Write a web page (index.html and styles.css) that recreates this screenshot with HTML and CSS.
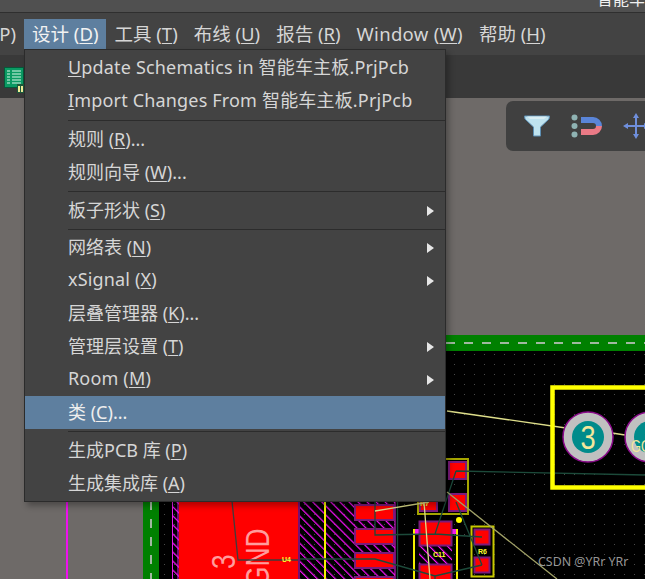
FILE: index.html
```html
<!DOCTYPE html>
<html lang="zh">
<head>
<meta charset="utf-8">
<title>设计菜单</title>
<link rel="stylesheet" href="styles.css">
</head>
<body>
<div class="app">
  <header class="titlebar"><span class="doc-title">智能车</span></header>
  <nav class="menubar">
    <span class="top-item clipped">P)</span>
    <span class="top-item active">设计 (<u>D</u>)</span>
    <span class="top-item">工具 (<u>T</u>)</span>
    <span class="top-item">布线 (<u>U</u>)</span>
    <span class="top-item">报告 (<u>R</u>)</span>
    <span class="top-item wide">Window (<u>W</u>)</span>
    <span class="top-item">帮助 (<u>H</u>)</span>
  </nav>
  <div class="tabstrip">
    <svg class="tab-icon" viewBox="0 0 22 26" width="22" height="26">
      <rect x="0.5" y="0.5" width="19" height="20" fill="#0b9a63" stroke="#06583a"/>
      <path d="M3 4h3M3 7h3M3 10h3M3 13h3M3 16h3M8 4h9M8 7h9M8 10h9M8 13h9M8 16h9" stroke="#d8f5e6" stroke-width="1.2"/>
      <rect x="13" y="17" width="9" height="9" fill="#1c5a3c"/>
      <path d="M15 19v6M18 19v6" stroke="#f2ee9a" stroke-width="2"/>
    </svg>
  </div>
  <main class="workspace">
    <svg class="pcb" viewBox="0 0 645 481" width="645" height="481">
      <defs>
        <pattern id="dots" width="10" height="10" patternUnits="userSpaceOnUse">
          <rect x="4" y="4" width="1" height="1" fill="#4a4a4a"/>
        </pattern>
        <pattern id="hatch" width="6.4" height="6.4" patternUnits="userSpaceOnUse" patternTransform="rotate(-45)">
          <rect width="1.2" height="6.4" fill="#ff10ff" x="0"/>
        </pattern>
      </defs>
      <g transform="translate(0 -98)">
        <rect class="board-edge" x="143" y="335" width="502" height="244"/>
        <rect class="board" x="159" y="351" width="486" height="228"/>
        <rect x="159" y="351" width="486" height="228" fill="url(#dots)"/>
        <path class="dash" d="M151 501V579M446 343H645"/>
        <path class="magenta-line" d="M67 335V579"/>

        <rect x="172" y="501" width="7" height="78" fill="url(#hatch)"/>
        <path class="magenta-thin" d="M172.500 501V579M178 501V579M299 501V579"/>
        <rect class="red" x="179" y="501" width="119" height="78"/>
        <text class="pad-big" transform="translate(235 569) rotate(-90) scale(.8 1)">3</text>
        <text class="pad-big" transform="translate(269 587) rotate(-90) scale(.8 1)">GND</text>
        <path class="trace-grey" d="M232 501L238 560H298"/>
        <text class="tiny" x="282" y="562">U4</text>

        <rect x="300" y="501" width="95" height="78" fill="url(#hatch)"/>
        <path class="yellow-line" d="M325 501V579"/>
        <path class="magenta-thin" d="M395 501V579"/>
        <path class="trace-green" d="M397.500 501V579"/>
        <rect class="pad" x="355" y="505" width="39" height="15"/>
        <rect class="pad" x="355" y="529" width="39" height="15"/>
        <rect class="pad" x="355" y="553" width="39" height="15"/>
        <rect class="pad" x="355" y="577" width="39" height="8"/>

        <rect class="olive" x="418" y="459" width="50" height="55"/>
        <rect class="pad" x="449" y="462" width="17" height="17"/>
        <rect class="pad" x="449" y="494" width="17" height="17"/>
        <rect class="pad" x="420" y="494" width="17" height="17"/>
        <text class="tiny" x="420" y="506">R7</text>

        <rect x="419" y="521" width="33" height="58" fill="url(#hatch)"/>
        <path class="yellow-line" d="M414 529V579M457 529V579"/>
        <rect class="magenta-fill" x="415" y="529" width="4" height="5"/>
        <rect class="magenta-fill" x="452" y="529" width="4" height="5"/>
        <rect class="pad" x="419.500" y="521.500" width="32" height="24"/>
        <rect class="pad" x="419.500" y="564.500" width="32" height="20"/>
        <text class="tiny" x="433" y="557">C11</text>

        <circle class="via" cx="459" cy="520" r="3"/>

        <rect class="olive-r" x="471.500" y="526.500" width="22" height="50"/>
        <rect class="pad" x="474.500" y="529.500" width="15" height="15"/>
        <rect class="pad" x="474.500" y="557.500" width="15" height="15"/>
        <text class="tiny" x="478" y="554">R6</text>

        <path class="trace-green" d="M375 501V535L435 534L482 537M300 559H375L435 576L482 565M456 471L435 534M456 471L645 475M456 502L482 565M435 576V579"/>
        <path class="trace-pale" d="M447 411L566 428M612 433L625 435M375 511L429 502M424 502L430 579"/>
        <path class="trace-olive" d="M447 492L557 579"/>

        <rect class="silk" x="552.500" y="387.500" width="110" height="100"/>
        <circle class="ring" cx="588" cy="437" r="25"/>
        <circle class="hole" cx="588" cy="437" r="16"/>
        <text class="pad-num" transform="translate(588 449) scale(.8 1)">3</text>
        <circle class="ring" cx="650" cy="437" r="25"/>
        <circle class="hole" cx="650" cy="437" r="16"/>
        <text class="pad-net" transform="translate(631 452) scale(.8 1)">GO</text>
      </g>
    </svg>

    <div class="float-tools">
      <svg class="tool-filter" viewBox="0 0 26 22" width="26" height="22">
        <path d="M0.500 1H25.500L25 4L16.500 12V21H9.500V12L1 4Z" fill="#bfe3ef" stroke="#5c8fb4"/>
        <path d="M3 1.500H23L20 4H6Z" fill="#d9edf3"/>
      </svg>
      <svg class="tool-magnet" viewBox="0 0 32 24" width="32" height="24">
        <circle cx="3.500" cy="3.500" r="3" fill="#8fb3b3"/>
        <circle cx="3.500" cy="12" r="3" fill="#8fb3b3"/>
        <circle cx="3.500" cy="20.500" r="3" fill="#8fb3b3"/>
        <path d="M10 3H22A9 9 0 0 1 31 12H25A3 3 0 0 0 22 9H10Z" fill="#5a85d8"/>
        <path d="M10 21H22A9 9 0 0 0 31 12H25A3 3 0 0 1 22 15H10Z" fill="#ea7a86"/>
      </svg>
      <svg class="tool-move" viewBox="0 0 26 26" width="26" height="26">
        <path d="M13 2V24M2 13H24" stroke="#6f8fdc" stroke-width="2" fill="none"/>
        <path d="M13 0L16 5H10ZM13 26L16 21H10ZM0 13L5 10V16ZM26 13L21 10V16Z" fill="#6f8fdc"/>
      </svg>
    </div>
  </main>

  <div class="dropdown">
    <div class="row latin"><span><u>U</u>pdate Schematics in 智能车主板.PrjPcb</span></div>
    <div class="row latin"><span><u>I</u>mport Changes From 智能车主板.PrjPcb</span></div>
    <div class="sep sep-wide"></div>
    <div class="row"><span>规则 (<u>R</u>)...</span></div>
    <div class="row"><span>规则向导 (<u>W</u>)...</span></div>
    <div class="sep"></div>
    <div class="row has-sub"><span>板子形状 (<u>S</u>)</span></div>
    <div class="sep sep-narrow"></div>
    <div class="row has-sub"><span>网络表 (<u>N</u>)</span></div>
    <div class="row has-sub latin"><span>xSignal (<u>X</u>)</span></div>
    <div class="row"><span>层叠管理器 (<u>K</u>)...</span></div>
    <div class="row has-sub"><span>管理层设置 (<u>T</u>)</span></div>
    <div class="row has-sub latin"><span>Room (<u>M</u>)</span></div>
    <div class="row selected"><span>类 (<u>C</u>)...</span></div>
    <div class="sep"></div>
    <div class="row"><span>生成PCB 库 (<u>P</u>)</span></div>
    <div class="row"><span>生成集成库 (<u>A</u>)</span></div>
  </div>

  <div class="watermark">CSDN @YRr YRr</div>
</div>
</body>
</html>
```

FILE: styles.css
```css
* { box-sizing: border-box; }

html, body {
  margin: 0;
  padding: 0;
  height: 100%;
  overflow: hidden;
}

body {
  font-family: "Noto Sans", "Noto Sans CJK SC", sans-serif;
  font-size: 18px;
  color: #d6d6d6;
  background: #6e6a68;
}

.app {
  position: relative;
  width: 645px;
  height: 579px;
  overflow: hidden;
  display: flex;
  flex-direction: column;
}

u {
  text-underline-offset: 2px;
  text-decoration-thickness: 1px;
}

.titlebar {
  height: 13px;
  flex: none;
  background: #505050;
  border-bottom: 1px solid #2f2f2f;
  display: flex;
  justify-content: flex-end;
  overflow: hidden;
}

.doc-title {
  width: 48px;
  line-height: 14px;
  font-size: 16px;
  margin-top: -8px;
  color: #f0f0f0;
  white-space: nowrap;
  overflow: hidden;
}

.menubar {
  height: 42px;
  flex: none;
  background: #434343;
  display: flex;
  align-items: flex-start;
  padding-top: 6px;
  font-size: 18.500px;
  white-space: nowrap;
}

.top-item {
  display: flex;
  align-items: center;
  height: 30px;
  padding: 0 8px 2px;
  white-space: pre;
}

.top-item.wide { letter-spacing: 0.300px; }

.top-item.clipped {
  width: 24px;
  padding: 0 8px 2px 0;
  justify-content: flex-end;
  overflow: hidden;
}

.top-item.active {
  background: #5e7f9f;
  color: #f2f2f2;
}

.tabstrip {
  height: 43px;
  flex: none;
  background: #393939;
  padding: 12px 0 0 4px;
}

.tab-icon { display: block; }

.workspace {
  position: relative;
  flex: 1;
  background: #6e6a68;
}

.pcb {
  position: absolute;
  left: 0;
  top: 0;
  display: block;
}

.board-edge { fill: #008000; }
.board { fill: #000; }
.dash { fill: none; stroke: #a0b8a0; stroke-width: 2; stroke-dasharray: 9 9; }
.magenta-line { fill: none; stroke: #ee10ee; stroke-width: 2; }
.magenta-thin { fill: none; stroke: #e81ee8; stroke-width: 1; }
.magenta-fill { fill: #f01cf0; }
.red { fill: #ff0000; }
.pad { fill: #ff0000; stroke: #7c1a7c; stroke-width: 2; }
.olive { fill: none; stroke: #a5a500; stroke-width: 2; }
.olive-r { fill: none; stroke: #c8c800; stroke-width: 2; }
.yellow-line { fill: none; stroke: #f4f000; stroke-width: 2; }
.silk { fill: none; stroke: #ffff00; stroke-width: 4.500; }
.ring { fill: #c0c0c0; stroke: #8a0a8a; stroke-width: 1.500; }
.hole { fill: #008b8b; }
.via { fill: #ffff00; }
.trace-green { fill: none; stroke: #1c4a3a; stroke-width: 1.300; }
.trace-grey { fill: none; stroke: #3d3d3d; stroke-width: 1.300; }
.trace-pale { fill: none; stroke: #dede8a; stroke-width: 1.300; }
.trace-olive { fill: none; stroke: #a3a368; stroke-width: 1.300; }

.tiny {
  font-family: "Liberation Sans", sans-serif;
  font-size: 7px;
  font-weight: 700;
  fill: #ffff30;
}

.pad-big {
  font-family: "Liberation Sans", sans-serif;
  font-size: 33px;
  fill: #ff9c9c;
}

.pad-num {
  font-family: "Liberation Sans", sans-serif;
  font-size: 34px;
  text-anchor: middle;
  fill: #f4e79c;
}

.pad-net {
  font-family: "Liberation Sans", sans-serif;
  font-size: 16px;
  fill: #f4e79c;
}

.float-tools {
  position: absolute;
  left: 506px;
  top: 3px;
  width: 160px;
  height: 50px;
  border-radius: 7px;
  background: #404040;
  display: flex;
  align-items: center;
  gap: 20.500px;
  padding-left: 18px;
}

.float-tools svg { flex: none; display: block; }

.dropdown {
  position: absolute;
  left: 24px;
  top: 49px;
  width: 422px;
  height: 453px;
  padding-top: 1px;
  background: #434343;
  border: 1px solid #2b2b2b;
  box-shadow: 3px 4px 6px rgba(0, 0, 0, 0.3);
  display: flex;
  flex-direction: column;
}

.row {
  flex: none;
  height: 33px;
  padding: 0 0 4px 43px;
  display: flex;
  align-items: center;
  white-space: pre;
  position: relative;
}

.row.latin { letter-spacing: 0.170px; }

.row.selected {
  background: #5e7f9f;
  color: #eeeeee;
}

.row.has-sub::after {
  content: "";
  position: absolute;
  right: 11px;
  top: 50%;
  margin-top: -5px;
  border-left: 7px solid #e6e6e6;
  border-top: 5px solid transparent;
  border-bottom: 5px solid transparent;
}

.sep {
  flex: none;
  height: 1px;
  margin: 2px 0 2px 43px;
  background: #2c2c2c;
  box-sizing: content-box;
}

.sep-wide { margin: 2.500px 0 2.500px 43px; }
.sep-narrow { margin: 1.500px 0 1.500px 43px; }

.watermark {
  position: absolute;
  left: 538px;
  top: 553px;
  font-family: "Noto Sans", sans-serif;
  font-size: 12.400px;
  color: rgba(200, 200, 200, 0.75);
  white-space: nowrap;
}
```
